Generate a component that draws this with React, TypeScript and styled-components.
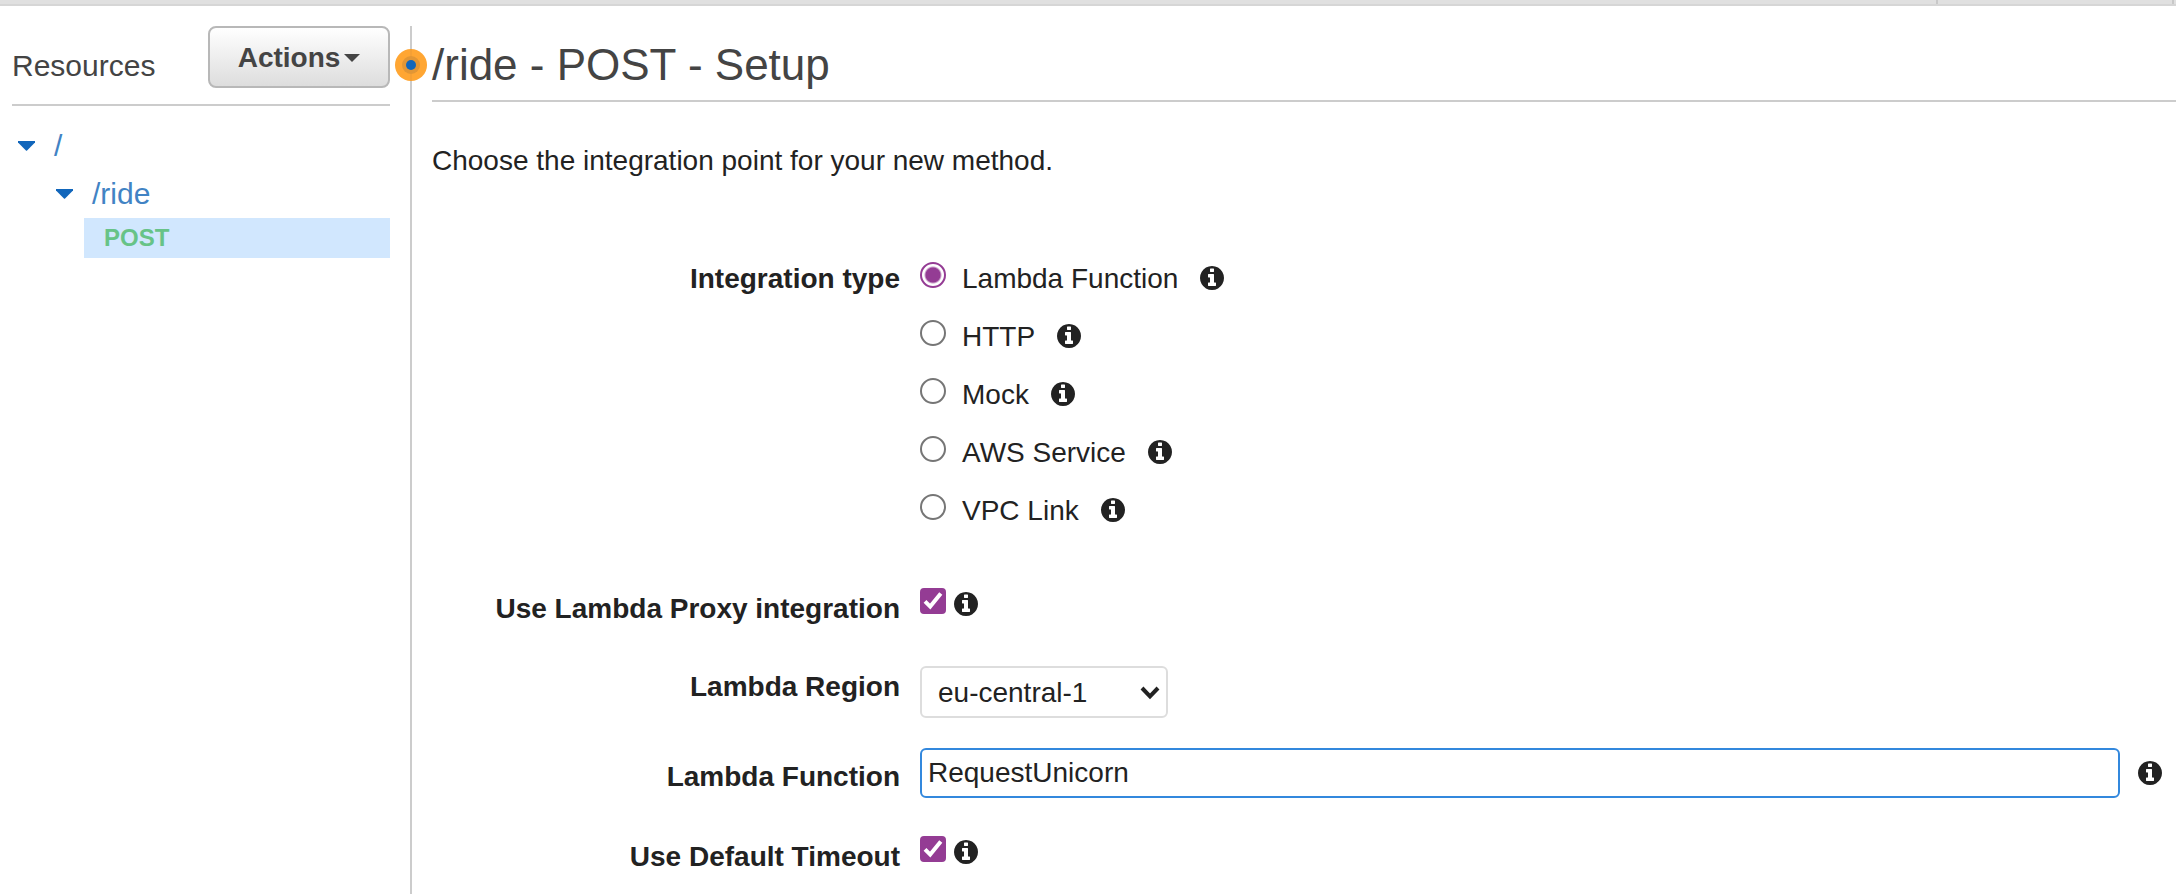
import React, { useState } from "react";
import styled, { createGlobalStyle } from "styled-components";

const GlobalStyle = createGlobalStyle`
  *, *::before, *::after { box-sizing: border-box; }
  body {
    margin: 0;
    background: #fff;
    color: #222;
    font-family: "Liberation Sans", Arial, Helvetica, sans-serif;
    font-size: 28px;
    line-height: 42px;
  }
`;

const Page = styled.div`
  display: flex;
  flex-direction: column;
  min-height: 100vh;
`;

const TopBar = styled.div`
  display: flex;
  justify-content: flex-end;
  height: 6px;
  padding-right: 2px;
  background: #e0e0e0;
  border-bottom: 2px solid #d6d6d6;
`;

const TopBarSection = styled.div<{ $width: number }>`
  width: ${(p) => p.$width}px;
  border-right: 2px solid #c8c8c8;
`;

const Columns = styled.div`
  display: flex;
  flex: 1;
  padding-top: 20px;
`;

const Sidebar = styled.aside`
  flex: none;
  width: 410px;
  padding: 0 20px 0 12px;
  font-size: 30px;
  line-height: 40px;
`;

const SidebarHeader = styled.div`
  display: flex;
  justify-content: space-between;
  height: 80px;
  border-bottom: 2px solid #ccc;
`;

const SidebarTitle = styled.h2`
  margin: 0;
  padding-top: 20px;
  color: #444;
  font-size: 30px;
  font-weight: 400;
`;

const ActionsButton = styled.button`
  display: flex;
  align-items: center;
  justify-content: center;
  gap: 4px;
  width: 182px;
  height: 62px;
  padding: 2px 0 0;
  border: 2px solid #b8b8b8;
  border-radius: 8px;
  background: linear-gradient(#fff, #ddd);
  color: #444;
  font: inherit;
  font-size: 28px;
  font-weight: 700;
`;

const Tree = styled.ul`
  margin: 0;
  padding: 0;
  list-style: none;
`;

const RootTree = styled(Tree)`
  padding: 20px 0 0 6px;
`;

const ChildTree = styled(Tree)`
  padding: 8px 0 0 38px;
`;

const MethodTree = styled(Tree)`
  padding: 4px 0 0 28px;
`;

const TreeNode = styled.div`
  display: flex;
  align-items: center;
  gap: 18px;
`;

const Toggle = styled.button`
  display: flex;
  padding: 0;
  border: 0;
  background: none;
  color: #1166bb;
`;

const ResourceLink = styled.a`
  color: #4183c4;
  text-decoration: none;
`;

const MethodLink = styled.a`
  display: block;
  height: 40px;
  padding-left: 20px;
  background: #d1e7fe;
  color: #67c387;
  font-size: 24px;
  font-weight: 700;
  text-decoration: none;
`;

const Divider = styled.div`
  position: relative;
  flex: none;
  width: 2px;
  background: #ccc;
`;

const DragHandle = styled.button`
  position: absolute;
  top: 23px;
  left: -15px;
  display: flex;
  padding: 0;
  border: 0;
  background: none;
`;

const Main = styled.main`
  flex: 1;
  min-width: 0;
  padding-left: 20px;
`;

const Title = styled.h1`
  height: 76px;
  margin: 0;
  padding-top: 18px;
  border-bottom: 2px solid #ccc;
  color: #444;
  font-size: 44px;
  font-weight: 400;
`;

const Intro = styled.p`
  margin: 38px 0 76px;
`;

const Row = styled.div<{ $after?: number }>`
  display: grid;
  grid-template-columns: 468px 1fr;
  column-gap: 20px;
  margin-bottom: ${(p) => p.$after ?? 0}px;
`;

const RowLabel = styled.label<{ $drop?: number }>`
  padding-top: ${(p) => p.$drop ?? 0}px;
  font-weight: 700;
  text-align: right;
`;

const RadioList = styled.div`
  display: flex;
  flex-direction: column;
  gap: 16px;
`;

const RadioRow = styled.div`
  display: flex;
  align-items: flex-start;
  gap: 22px;
`;

const RadioLabel = styled.label`
  display: flex;
  gap: 16px;
`;

const Radio = styled.input`
  width: 26px;
  height: 26px;
  margin: 4px 0 0;
  border: 2px solid #767676;
  border-radius: 50%;
  background: #fff;
  appearance: none;
  &:checked {
    border-color: #943c94;
    background: radial-gradient(circle, #943c94 7px, #fff 9px);
  }
`;

const CheckGroup = styled.div`
  display: flex;
  align-items: flex-start;
  gap: 8px;
`;

const CheckFrame = styled.span`
  position: relative;
  display: flex;
`;

const Checkbox = styled.input`
  width: 26px;
  height: 26px;
  margin: 0;
  border: 2px solid #767676;
  border-radius: 4px;
  background: #fff;
  appearance: none;
  &:checked {
    border-color: #943c94;
    background: #943c94;
  }
`;

const Tick = styled.svg`
  position: absolute;
  inset: 0;
  pointer-events: none;
`;

const InfoButton = styled.button<{ $drop?: number }>`
  display: flex;
  flex: none;
  margin: ${(p) => p.$drop ?? 0}px 0 0;
  padding: 0;
  border: 0;
  background: none;
  color: #222;
`;

const SelectFrame = styled.div`
  position: relative;
  justify-self: start;
`;

const Select = styled.select`
  display: block;
  width: 248px;
  height: 52px;
  padding: 2px 16px 0;
  border: 2px solid #ddd;
  border-radius: 6px;
  background: #fff;
  color: inherit;
  font: inherit;
  appearance: none;
`;

const SelectArrow = styled.svg`
  position: absolute;
  top: 20px;
  right: 8px;
  pointer-events: none;
`;

const InputGroup = styled.div`
  display: flex;
  align-items: center;
  gap: 18px;
  padding-right: 14px;
`;

const TextInput = styled.input`
  flex: 1;
  min-width: 0;
  height: 50px;
  padding: 0 6px;
  border: 2px solid #3388dd;
  border-radius: 6px;
  background: #fff;
  color: inherit;
  font: inherit;
  outline: none;
`;

const Info = ({ about, drop }: { about: string; drop?: number }) => (
  <InfoButton type="button" aria-label={`About ${about}`} $drop={drop}>
    <svg width="24" height="24" viewBox="128 128 1536 1536" fill="currentColor">
      <path d="M1152 1376v-160q0-14-9-23t-23-9h-96v-512q0-14-9-23t-23-9h-320q-14 0-23 9t-9 23v160q0 14 9 23t23 9h96v320h-96q-14 0-23 9t-9 23v160q0 14 9 23t23 9h448q14 0 23-9t9-23zm-128-896v-160q0-14-9-23t-23-9h-192q-14 0-23 9t-9 23v160q0 14 9 23t23 9h192q14 0 23-9t9-23zm640 416q0 209-103 385.5t-279.5 279.5-385.5 103-385.5-103-279.5-279.5-103-385.5 103-385.5 279.5-279.5 385.5-103 385.5 103 279.5 279.5 103 385.5z" />
    </svg>
  </InfoButton>
);

const CheckField = ({ id, about }: { id: string; about: string }) => {
  const [checked, setChecked] = useState(true);
  return (
    <CheckGroup>
      <CheckFrame>
        <Checkbox
          id={id}
          type="checkbox"
          checked={checked}
          onChange={(e) => setChecked(e.target.checked)}
        />
        {checked && (
          <Tick width="26" height="26" viewBox="0 0 26 26" fill="none" stroke="#fff" strokeWidth="4">
            <path d="M5 13.4 10.2 18.6 20.8 5.6" />
          </Tick>
        )}
      </CheckFrame>
      <Info about={about} drop={4} />
    </CheckGroup>
  );
};

const TreeToggle = ({ name }: { name: string }) => (
  <Toggle type="button" aria-label={`Collapse ${name}`}>
    <svg width="18" height="10" viewBox="0 0 18 10" fill="currentColor">
      <path d="M0 0H17V1.5L8.8 9.7H8.2L0 1.5Z" />
    </svg>
  </Toggle>
);

const integrationTypes = ["Lambda Function", "HTTP", "Mock", "AWS Service", "VPC Link"];

export default function App() {
  const [integration, setIntegration] = useState(integrationTypes[0]);
  const [functionName, setFunctionName] = useState("RequestUnicorn");

  return (
    <>
      <GlobalStyle />
      <Page>
        <TopBar>
          <TopBarSection $width={2} />
          <TopBarSection $width={236} />
        </TopBar>
        <Columns>
          <Sidebar>
            <SidebarHeader>
              <SidebarTitle>Resources</SidebarTitle>
              <ActionsButton type="button">
                Actions
                <svg width="16" height="8" viewBox="0 0 16 8" fill="currentColor">
                  <path d="M0 0H16L8 8Z" />
                </svg>
              </ActionsButton>
            </SidebarHeader>
            <RootTree>
              <li>
                <TreeNode>
                  <TreeToggle name="/" />
                  <ResourceLink href="#root">/</ResourceLink>
                </TreeNode>
                <ChildTree>
                  <li>
                    <TreeNode>
                      <TreeToggle name="/ride" />
                      <ResourceLink href="#ride">/ride</ResourceLink>
                    </TreeNode>
                    <MethodTree>
                      <li>
                        <MethodLink href="#ride-post">POST</MethodLink>
                      </li>
                    </MethodTree>
                  </li>
                </ChildTree>
              </li>
            </RootTree>
          </Sidebar>
          <Divider>
            <DragHandle type="button" aria-label="Resize panels">
              <svg width="32" height="32" viewBox="0 0 32 32">
                <circle cx="16" cy="16" r="16" fill="#ffa633" />
                <path d="M15 0h2v32h-2z" fill="#ee9c37" opacity=".6" />
                <circle cx="16" cy="16" r="9" fill="#e29635" />
                <circle cx="16" cy="16" r="5" fill="#1166bb" />
              </svg>
            </DragHandle>
          </Divider>
          <Main>
            <Title>/ride - POST - Setup</Title>
            <Intro>Choose the integration point for your new method.</Intro>
            <form onSubmit={(e) => e.preventDefault()}>
              <Row $after={56}>
                <RowLabel as="span" id="integration-type">Integration type</RowLabel>
                <RadioList role="radiogroup" aria-labelledby="integration-type">
                  {integrationTypes.map((name) => (
                    <RadioRow key={name}>
                      <RadioLabel>
                        <Radio
                          type="radio"
                          name="integration"
                          checked={integration === name}
                          onChange={() => setIntegration(name)}
                        />
                        {name}
                      </RadioLabel>
                      <Info about={name} drop={8} />
                    </RadioRow>
                  ))}
                </RadioList>
              </Row>
              <Row $after={36}>
                <RowLabel htmlFor="proxy">Use Lambda Proxy integration</RowLabel>
                <CheckField id="proxy" about="Lambda Proxy integration" />
              </Row>
              <Row $after={30}>
                <RowLabel htmlFor="region">Lambda Region</RowLabel>
                <SelectFrame>
                  <Select id="region" defaultValue="eu-central-1">
                    <option>eu-central-1</option>
                    <option>eu-west-1</option>
                    <option>us-east-1</option>
                  </Select>
                  <SelectArrow width="20" height="14" viewBox="0 0 20 14" fill="none" stroke="#222" strokeWidth="4">
                    <path d="M2 2 10 10.4 18 2" />
                  </SelectArrow>
                </SelectFrame>
              </Row>
              <Row $after={38}>
                <RowLabel htmlFor="function" $drop={8}>Lambda Function</RowLabel>
                <InputGroup>
                  <TextInput
                    id="function"
                    type="text"
                    value={functionName}
                    onChange={(e) => setFunctionName(e.target.value)}
                  />
                  <Info about="Lambda Function name" />
                </InputGroup>
              </Row>
              <Row>
                <RowLabel htmlFor="timeout">Use Default Timeout</RowLabel>
                <CheckField id="timeout" about="Default Timeout" />
              </Row>
            </form>
          </Main>
        </Columns>
      </Page>
    </>
  );
}
